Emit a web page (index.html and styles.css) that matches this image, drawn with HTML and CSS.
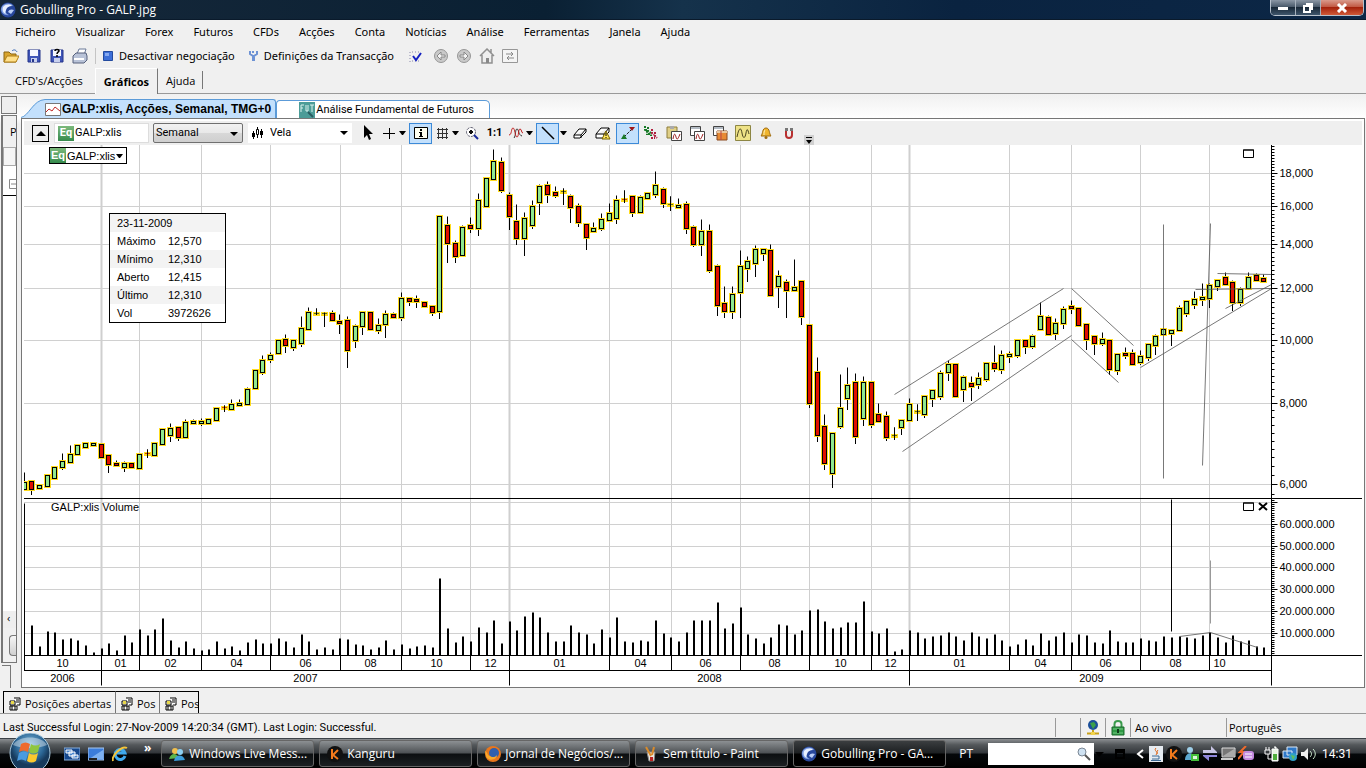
FILE: index.html
```html
<!DOCTYPE html>
<html lang="pt">
<head>
  <meta charset="UTF-8" />
  <meta name="viewport" content="width=device-width, initial-scale=1.0"/>
  <title>Gobulling Pro - GALP.jpg</title>
  <link rel="stylesheet" href="styles.css">
</head>
<body>

  <svg width="0" height="0" class="defs" aria-hidden="true">
    <defs>
      <symbol id="globe" viewBox="0 0 16 16">
        <circle cx="8" cy="8" r="7.5" fill="#27479c"/>
        <path d="M1 7c1-6 10-7 12-3-3-1-6 0-7 3s0 5 3 6c-4 1-8-2-8-6z" fill="#7f9fe0"/>
        <path d="M3 5c3-3 7-3 9-1-3 0-5 1-6 4s-1 2 0 4c-3-1-4-4-3-7z" fill="#e8f0ff"/>
        <path d="M8 10c1-3 4-3 6-2l-3 4z" fill="#b9cdf5"/>
      </symbol>
      <symbol id="people" viewBox="0 0 12 14">
        <path d="M5 1h6v7H8M1 4h5v4H1zM1 9h7v4H1zM3 9v4M6 9v4" fill="#fff" stroke="#000"/>
        <path d="M2 4h3v3H2z" fill="#e8d84a"/>
        <path d="M7 3h3M7 5h3" stroke="#000"/>
      </symbol>
      <symbol id="kanguru" viewBox="0 0 16 16">
        <circle cx="8" cy="8" r="8" fill="#111"/>
        <path d="M5 3v10M11 4l-5 5 5 4" fill="none" stroke="#f47a1c" stroke-width="2"/>
      </symbol>
      <symbol id="wave" viewBox="0 0 14 12">
        <path d="M5 11c2-2 1-9 3-9s1 6 5 7" fill="none" stroke="#333"/>
        <path d="M0 8c3 0 2-7 4-7s2 9 4 9 1-8 3-8 1 4 3 4" fill="none" stroke="#c02020"/>
      </symbol>
      <symbol id="page-wave" viewBox="0 0 16 16">
        <path d="M5.500 6.500h10v9h-10z" fill="#fff" stroke="#444"/>
        <path d="M7 14c1-6 2-6 3-2s2 2 4-3" fill="none" stroke="#a02020"/>
      </symbol>
    </defs>
  </svg>

  <header class="titlebar">
    <svg class="icon16"><use href="#globe"/></svg>
    <h1>Gobulling Pro - GALP.jpg</h1>
    <div class="window-controls">
      <button class="win-btn" aria-label="Minimizar"><svg width="12" height="8"><path d="M1 3h10v3H1z" fill="#fff"/></svg></button>
      <button class="win-btn" aria-label="Restaurar"><svg width="12" height="12"><path d="M4 2h6v6M2 4h6v6H2z" fill="none" stroke="#fff" stroke-width="2"/></svg></button>
      <button class="win-btn win-close" aria-label="Fechar"><svg width="12" height="10"><path d="M2 1l8 8M10 1l-8 8" stroke="#fff" stroke-width="3"/></svg></button>
    </div>
  </header>

  <nav class="menubar">
    <button>Ficheiro</button>
    <button>Visualizar</button>
    <button>Forex</button>
    <button>Futuros</button>
    <button>CFDs</button>
    <button>Acções</button>
    <button>Conta</button>
    <button>Notícias</button>
    <button>Análise</button>
    <button>Ferramentas</button>
    <button>Janela</button>
    <button>Ajuda</button>
  </nav>

  <div class="toolbar">
    <button class="tb" aria-label="Abrir"><svg class="icon16"><path d="M1 4h5l2 2h5v8H1z" fill="#d9a52e" stroke="#8a6512"/><path d="M1 14l3-6h12l-3 6z" fill="#ffe08a" stroke="#b07f16"/><path d="M9 3c2-2 4-1 5 1" fill="none" stroke="#3667b5"/></svg></button>
    <button class="tb" aria-label="Guardar"><svg class="icon16"><path d="M2 2h12v12H2z" fill="#3f55b8" stroke="#25358a"/><path d="M4 2h8v6H4z" fill="#f5f7ff"/><path d="M5 10h6v4H5z" fill="#c8d0ee"/><path d="M6 11h2v3H6z" fill="#25358a"/></svg></button>
    <button class="tb" aria-label="Guardar como"><svg class="icon16"><path d="M2 2h12v12H2z" fill="#3f55b8" stroke="#25358a"/><path d="M4 2h8v6H4z" fill="#f5f7ff"/><path d="M5 10h6v4H5z" fill="#c8d0ee"/><path d="M6 3c0-2 4-2 4 0 0 1-2 1-2 3M8 7v2" fill="none" stroke="#000" stroke-width="1.500"/></svg></button>
    <button class="tb" aria-label="Imprimir"><svg class="icon16"><path d="M5 6l2-5h7l-2 6z" fill="#fff" stroke="#6b7a99"/><path d="M1 8l3-3h10l1 3v4l-3 3H1z" fill="#b9c3d8" stroke="#56617c"/><path d="M2 11h10" stroke="#fff" stroke-width="2"/></svg></button>
    <span class="sep"></span>
    <button class="tb text"><svg width="10" height="10"><path d="M.5.5h9v9h-9z" fill="#3d6fd8" stroke="#234a9e"/><path d="M2 2h4v3H2z" fill="#86a9f0"/></svg>Desactivar negociação</button>
    <button class="tb text"><svg width="9" height="12"><path d="M1 1v3l3 2v5M8 1v3L5 6v5M4 1v2" fill="none" stroke="#6d92d4" stroke-width="2"/></svg>Definições da Transacção</button>
    <button class="tb" aria-label="Confirmar"><svg class="icon16"><path d="M2 4v10M4 4h9M4 13h9" stroke="#88a" stroke-dasharray="1 2"/><path d="M5 8l3 4 5-7" fill="none" stroke="#1420c0" stroke-width="2"/></svg></button>
    <div class="nav-icons">
      <button class="tb" aria-label="Anterior"><svg class="icon16"><circle cx="8" cy="8" r="6.500" fill="#c9c9c9" stroke="#979797"/><path d="M4 8l4-4v3h4v2H8v3z" fill="#f5f5f5" stroke="#888"/></svg></button>
      <button class="tb" aria-label="Seguinte"><svg class="icon16"><circle cx="8" cy="8" r="6.500" fill="#c9c9c9" stroke="#979797"/><path d="M12 8L8 4v3H4v2h4v3z" fill="#f5f5f5" stroke="#888"/></svg></button>
      <button class="tb" aria-label="Início"><svg class="icon16"><path d="M1 8l7-7 7 7M3 7v8h10V7M12 5V1" fill="#eee" stroke="#909090" stroke-width="1.500"/><path d="M7 10h3v5H7z" fill="#888"/></svg></button>
      <button class="tb" aria-label="Actualizar"><svg class="icon16"><path d="M.5 1.500h15v13H.5z" fill="#f4f4f4" stroke="#979797"/><path d="M4 6h7M9 4l2 2-2 2M12 10H5M7 8l-2 2 2 2" fill="none" stroke="#888"/></svg></button>
    </div>
  </div>

  <div class="module-tabs">
    <button>CFD's/Acções</button>
    <button class="selected">Gráficos</button>
    <button class="last">Ajuda</button>
    <span class="rest"></span>
  </div>

  <main class="workspace">
    <aside class="dock">
      <div class="dock-head"></div>
      <div class="dock-panel">
        <div class="dock-title">P</div>
        <div class="dock-columns"></div>
        <div class="dock-row"><svg width="7" height="10"><path d="M7 .5H.5v9H7M2 5h5" fill="none" stroke="#888"/></svg></div>
        <div class="dock-body"></div>
        <div class="dock-scroll">‹</div>
        <div class="dock-foot"><span></span></div>
      </div>
      <div class="dock-end"></div>
    </aside>

    <section class="chart-window">
      <div class="doc-tabs">
        <svg class="slant" width="24" height="19"><path d="M0 19C8 17 12 1 24 .5V19z" fill="#c3e0fc"/><path d="M0 18.500C8 17 12 1 24 .5" fill="none" stroke="#5c9bd8"/></svg>
        <button class="doc-tab selected"><svg width="16" height="13"><path d="M.5.500h15v12H.5z" fill="#fff" stroke="#777"/><path d="M1 9l3-3 3 2 3-4 5 4" fill="none" stroke="#c02a2a"/></svg>GALP:xlis, Acções, Semanal, TMG+0</button>
        <button class="doc-tab"><svg width="16" height="16"><path d="M0 0h16v16H0z" fill="#4c9c98"/><path d="M2 10V3h3M2 6h2M7 3v6h2V3M11 3h4M13 3v7" fill="none" stroke="#d8f2ee"/><path d="M9 10l5 5" stroke="#2a5c60" stroke-width="2"/></svg>Análise Fundamental de Futuros</button>
      </div>

      <div class="chart-frame">
        <div class="chart-tools">
          <button class="collapse" aria-label="Recolher"><svg width="10" height="6"><path d="M0 6l5-5 5 5z"/></svg></button>
          <label class="symbol-field"><span class="eq">Eq</span><input type="text" value="GALP:xlis" aria-label="Símbolo"></label>
          <div class="select-wrap period"><select aria-label="Período"><option>Semanal</option></select></div>
          <div class="select-wrap style">
            <svg width="14" height="12"><path d="M2.500 4v8M6.500 0v11M10.500 2v9" stroke="#000"/><path d="M1 6h3v4H1zM9 4h3v4H9z" fill="#000"/><path d="M5.500 2.500h2v5h-2z" fill="#fff" stroke="#000"/></svg>
            <select aria-label="Tipo de gráfico"><option>Vela</option></select>
          </div>
          <button class="tool" aria-label="Cursor"><svg class="icon16"><path d="M4 0v13l3-3 2 5 2-1-2-5h4z"/></svg></button>
          <button class="tool drop" aria-label="Cruz"><svg class="icon16"><path d="M2 8.500h12M8.500 3v11" stroke="#000"/></svg></button><i class="caret"></i>
          <button class="tool active" aria-label="Informação"><svg class="icon16"><path d="M1.500 2.500h13v11h-13z" fill="#fffff0" stroke="#000"/><path d="M7 4h2v2H7zM6 7h3v4h1v1H6v-1h1V8H6z"/></svg></button>
          <button class="tool drop" aria-label="Grelha"><svg class="icon16"><path d="M4.500 3v11M8.500 3v11M12.500 3v11M3 4.500h11M3 8.500h11M3 12.500h11" stroke="#333"/></svg></button><i class="caret"></i>
          <button class="tool" aria-label="Zoom"><svg class="icon16"><circle cx="7" cy="7" r="4.500" fill="#fff" stroke="#667" stroke-dasharray="3 1"/><path d="M5 7h4M7 5v4" stroke="#111" stroke-width="2"/><path d="M10 10l4 4" stroke="#1a2a9a" stroke-width="2"/></svg></button>
          <button class="tool ratio">1:1</button>
          <button class="tool drop" aria-label="Indicadores"><svg width="14" height="12"><use href="#wave"/></svg></button><i class="caret"></i>
          <button class="tool active" aria-label="Linha"><svg class="icon16"><path d="M2 2l12 12" stroke="#000" stroke-width="1.500"/></svg></button><i class="caret"></i>
          <button class="tool" aria-label="Apagar"><svg class="icon16"><path d="M2 10l5-6h7l-5 6zM2 10v3h6l6-6V4M9 10v3" fill="#fff" stroke="#000"/></svg></button>
          <button class="tool" aria-label="Apagar tudo"><svg class="icon16"><path d="M1 9l5-6h8l-5 6zM1 9v4h7l6-6V3M9 9v4" fill="#fff" stroke="#000"/><path d="M11 6l4 8H7z" fill="#ffe65a" stroke="#776200"/><path d="M11 8v3M11 12v1" stroke="#000"/></svg></button>
          <button class="tool active" aria-label="Tendência"><svg class="icon16"><path d="M4 12l8-8" stroke="#222" stroke-dasharray="3 1"/><path d="M1 14l3-5 3 5z" fill="#187a28"/><path d="M9 2h6l-3 4z" fill="#a01818"/></svg></button>
          <button class="tool" aria-label="Sinais"><svg class="icon16"><path d="M2 1v4l2 1v4M5 2v4l3 2v3M2 5h3M5 9h3" fill="none" stroke="#187a28" stroke-width="2" stroke-dasharray="2 1"/><path d="M9 4v4l2 2M12 7v4l2 2M8 13h4" fill="none" stroke="#b02040" stroke-width="2" stroke-dasharray="2 1"/></svg></button>
          <button class="tool" aria-label="Colar"><svg class="icon16"><path d="M1 2h10v11H1z" fill="#e0cf86" stroke="#8c7c3a"/><path d="M4 1h4v3H4z" fill="#aaa"/><use href="#page-wave"/></svg></button>
          <button class="tool" aria-label="Copiar"><svg class="icon16"><path d="M1.500 1.500h10v9h-10z" fill="#fff" stroke="#444"/><path d="M2 3h9" stroke="#678"/><use href="#page-wave"/></svg></button>
          <button class="tool" aria-label="Modelos"><svg class="icon16"><path d="M1.500 1.500h10v9h-10z" fill="#fff" stroke="#444"/><path d="M2 3h9" stroke="#678"/><path d="M5 6h10v9H5z" fill="#e88a34" stroke="#8a4a20"/><path d="M5 7h10" stroke="#e9c8a0" stroke-width="2"/><path d="M9 6v9" stroke="#b44"/></svg></button>
          <button class="tool" aria-label="Estudos"><svg class="icon16"><path d="M.5.500h15v15H.5z" fill="#eee287" stroke="#8d8644"/><path d="M2 12C4 2 6 2 7 8s3 6 4 0 2-3 3 1" fill="none" stroke="#4a4420"/></svg></button>
          <button class="tool" aria-label="Alarme"><svg class="icon16"><path d="M3 11c2-2 1-8 5-8s3 6 5 8z" fill="#f0b52e" stroke="#a06c10"/><path d="M7 5c-1 1-1 3-1 5" fill="none" stroke="#fff2c0"/><circle cx="8" cy="12.500" r="1.500" fill="#a06c10"/></svg></button>
          <button class="tool" aria-label="Íman"><svg class="icon16"><path d="M5 6v4c0 4 6 4 6 0V6" fill="none" stroke="#b83030" stroke-width="2"/><path d="M4 4.500h3M9 4.500h3" stroke="#777" stroke-width="3"/></svg></button>
          <button class="more" aria-label="Mais"><svg width="10" height="10"><path d="M2 2h6v1H2zM2 5h6L5 9z"/></svg></button>
        </div>

        <div class="chart">
          <svg id="plot" role="img" aria-label="GALP:xlis semanal"></svg>
          <button class="series"><span class="eq">Eq</span>GALP:xlis<i class="caret"></i></button>
          <table class="quote">
            <tr><th colspan="2">23-11-2009</th></tr>
            <tr><th>Máximo</th><td>12,570</td></tr>
            <tr><th>Mínimo</th><td>12,310</td></tr>
            <tr><th>Aberto</th><td>12,415</td></tr>
            <tr><th>Último</th><td>12,310</td></tr>
            <tr><th>Vol</th><td>3972626</td></tr>
          </table>
          <button class="pane-btn price-max" aria-label="Maximizar preço"><svg width="11" height="9"><path d="M.5 1h10v7.500H.5zM0 1h11" fill="none" stroke="#000"/></svg></button>
          <button class="pane-btn vol-max" aria-label="Maximizar volume"><svg width="11" height="9"><path d="M.5 1h10v7.500H.5zM0 1h11" fill="none" stroke="#000"/></svg></button>
          <button class="pane-btn vol-close" aria-label="Fechar volume"><svg width="10" height="9"><path d="M1 1l8 7M9 1L1 8" stroke="#000" stroke-width="2"/></svg></button>
        </div>
      </div>
    </section>
  </main>

  <div class="bottom-tabs">
    <button><svg width="12" height="14"><use href="#people"/></svg>Posições abertas</button>
    <button class="short"><svg width="12" height="14"><use href="#people"/></svg>Pos</button>
    <button class="short cut"><svg width="12" height="14"><use href="#people"/></svg>Pos</button>
  </div>

  <div class="statusbar">
    <span class="message">Last Successful Login: 27-Nov-2009 14:20:34 (GMT). Last Login: Successful.</span>
    <span class="cell"></span>
    <span class="cell"><svg width="14" height="16"><circle cx="7" cy="5" r="5" fill="#1b4f9a"/><path d="M4 3l4-1 2 3-3 4z" fill="#3ba04a"/><path d="M7 10v3M1 13.500h12" stroke="#c9a21c" stroke-width="2"/><path d="M5 12h4v3H5z" fill="#f2d34a"/></svg></span>
    <span class="cell"><svg width="14" height="16"><path d="M3.500 7V4c0-4 7-4 7 0v3" fill="none" stroke="#3a9a4c" stroke-width="2"/><path d="M1 7h12v8H1z" fill="#2f9a45" stroke="#1c6a2e"/><path d="M2 9h10M2 13h10" stroke="#74c884"/><path d="M6 9h2v4H6z" fill="#0d3a18"/></svg></span>
    <span class="cell live">Ao vivo</span>
    <span class="cell lang">Português</span>
  </div>

  <footer class="taskbar">
    <button class="start" aria-label="Iniciar"><svg width="42" height="36" viewBox="0 0 42 36">
      <defs><radialGradient id="orb" cy=".3"><stop offset="0" stop-color="#7fb8dc"/><stop offset=".7" stop-color="#2c6796"/><stop offset="1" stop-color="#173a5c"/></radialGradient></defs>
      <circle cx="21" cy="20" r="20" fill="url(#orb)" stroke="#a8c8dc"/>
      <path d="M4 12C9 2 33 2 38 12 30 16 12 16 4 12z" fill="#fff" opacity=".4"/>
      <path d="M12 11c3-2 6-2 9 0l-2 8c-3-2-6-2-9 0z" fill="#ee6a2c"/>
      <path d="M22 11c3 2 6 2 9 0l-2 8c-3 2-6 2-9 0z" fill="#8fc63f"/>
      <path d="M10 20c3-2 6-2 9 0l-2 8c-3-2-6-2-9 0z" fill="#4a9be0"/>
      <path d="M20 20c3 2 6 2 9 0l-2 8c-3 2-6 2-9 0z" fill="#fbc92e"/>
    </svg></button>
    <div class="quick">
      <button aria-label="Alternar janelas"><svg class="icon16"><path d="M0 2h16v12H0z" fill="#16498f" stroke="#8ab0dc"/><path d="M2 4h6v3H2zM5 6h6v4H5zM8 9h6v3H8z" fill="#4a86cf" stroke="#fff"/></svg></button>
      <button aria-label="Ambiente de trabalho"><svg class="icon16"><path d="M0 2h16v12H0z" fill="#3b7ddb" stroke="#a9c8ee"/><path d="M1 13L15 4v9z" fill="#7db1f1"/><path d="M1 12h8v2H1z" fill="#222"/></svg></button>
      <button aria-label="Internet Explorer"><svg class="icon16"><path d="M13 10a5 5 0 1 1 0-3H4" fill="none" stroke="#3fa9ee" stroke-width="3"/><path d="M1 15C-1 10 10-1 15 2" fill="none" stroke="#f3c43b" stroke-width="2"/></svg></button>
      <span class="chevrons">»</span>
    </div>
    <div class="tasks">
      <button class="task"><svg class="icon16"><circle cx="6" cy="5" r="3" fill="#f1c04e"/><circle cx="11" cy="6" r="3" fill="#8ed0f2"/><path d="M0 13c2-7 8-6 10-1z" fill="#5bb54d"/><path d="M5 15c1-7 9-7 11-1z" fill="#3d9edc"/></svg><span>Windows Live Mess...</span></button>
      <button class="task"><svg class="icon16"><use href="#kanguru"/></svg><span>Kanguru</span></button>
      <button class="task"><svg class="icon16"><circle cx="8" cy="8" r="8" fill="#e8761c"/><circle cx="9" cy="7" r="5" fill="#2f5fae"/><path d="M0 5c3 1 2 5 5 5 2 2 6 1 7-1 0 5-9 7-11 1z" fill="#f7a82a"/></svg><span>Jornal de Negócios/...</span></button>
      <button class="task"><svg class="icon16"><path d="M4 6h8l-1 9H6z" fill="#ece7e0" stroke="#888"/><path d="M3 1l5 9M9 9l2-8" stroke="#d98b2b" stroke-width="2"/><path d="M7 11h3v4H7z" fill="#b22"/></svg><span>Sem título - Paint</span></button>
      <button class="task current"><svg class="icon16"><use href="#globe"/></svg><span>Gobulling Pro - GA...</span></button>
    </div>
    <span class="kbd">PT</span>
    <label class="search"><input type="text" aria-label="Pesquisar"><svg width="14" height="14"><circle cx="5" cy="5" r="4" fill="#cfe2f2" stroke="#7b8794"/><path d="M8 8l5 5" stroke="#555" stroke-width="2"/></svg></label>
    <div class="tray">
      <svg class="icon16"><path d="M1 6h9L5 11z"/></svg>
      <svg class="icon16 last-dark"><path d="M4 4h8v8H4zM4 6h8" fill="none" stroke="#000" stroke-width="2"/></svg>
      <svg width="12" height="16"><path d="M9 4L4 8l5 4" fill="none" stroke="#fff" stroke-width="2"/></svg>
      <svg class="icon16"><path d="M1 0h14v16H1z" fill="#e6ebf0"/><path d="M8 2c-3 3 3 3 0 7M10 4c-2 2 0 2-1 4" fill="none" stroke="#e26a1c"/><path d="M4 10h7v3H4M3 14.500h10" fill="none" stroke="#3d6a94"/></svg>
      <svg class="icon16"><use href="#kanguru"/></svg>
      <svg class="icon16"><circle cx="6" cy="4" r="3" fill="#9fd0ea"/><path d="M1 14c0-9 10-9 10 0z" fill="#5ca8d0"/><path d="M7 8h8v7H7z" fill="#45bf3a"/><path d="M9 10h4v3H9z" fill="#dff6dc"/></svg>
      <svg class="icon16"><path d="M1 4h8V0l6 6v1H1z" fill="#c9c6e4"/><path d="M15 9H1v1l6 5v-4h8z" fill="#9088dc"/></svg>
      <svg class="icon16"><path d="M2 2h13v9H2z" fill="#777" stroke="#ddd"/><path d="M3 10L14 3v7z" fill="#aaa"/><path d="M1 13h12" stroke="#ccc" stroke-width="2"/></svg>
      <svg class="icon16 gap"><path d="M8 0L2 6h4L0 13" fill="none" stroke="#ee6a2c" stroke-width="2"/><rect x="5" y="5" width="11" height="9" rx="3" fill="#c48be0"/><path d="M7 8h7M7 11h7" stroke="#fff"/></svg>
      <svg class="icon16"><path d="M8 3h6v12H8zM10 1h2v2" fill="#e8f4e4" stroke="#fff"/><path d="M9 8h4v6H9z" fill="#4fae3c"/><path d="M2 1v3M5 1v3M1 4h5v4H1zM4 8v5h4" fill="none" stroke="#fff"/></svg>
      <svg class="icon16"><path d="M5 1h10v8H5zM1 5h9v7H1z" fill="#2e78c8" stroke="#dfe9f3"/><circle cx="11" cy="11" r="4" fill="#2f9fc8"/><path d="M9 9l4 1-2 4z" fill="#5fc05a"/></svg>
      <svg class="icon16"><path d="M1 6h3l4-4v12L4 10H1z" fill="#eee"/><path d="M10 5c2 2 2 4 0 6M13 3c3 3 3 7 0 10" fill="none" stroke="#cfeccf"/></svg>
      <time>14:31</time>
    </div>
  </footer>

  <script src="chart.js"></script>
</body>
</html>
```
FILE: styles.css
```css
* {
  box-sizing: border-box;
}

body {
  font-family: "Open Sans", sans-serif;
  font-size: 11px;
  line-height: 16px;
  margin: 0;
  color: #000;
  background-color: #f0f0f0;
  display: flex;
  flex-direction: column;
  min-height: 100vh;
}

button,
input,
select {
  font: inherit;
  color: inherit;
  background: none;
  border: none;
  margin: 0;
  padding: 0;
  white-space: nowrap;
}

svg {
  display: block;
  flex: none;
}

.defs {
  position: absolute;
}

.icon16 {
  width: 16px;
  height: 16px;
}

/* title bar */
.titlebar {
  display: flex;
  align-items: center;
  gap: 4px;
  height: 20px;
  color: #fff;
  background: linear-gradient(90deg, #16283a, #0a2033 40%, #15324b 50%, #0a2340 70%, #0c2746);
  border-bottom: 1px solid #0a1a2b;
}

.titlebar h1 {
  flex: 1;
  margin: 0;
  font-size: 12px;
  font-weight: normal;
}

.window-controls {
  display: flex;
  align-self: flex-start;
  height: 16px;
  margin-right: 2px;
  border: 1px solid #b7c1cc;
  border-top: none;
  border-radius: 0 0 5px 5px;
  overflow: hidden;
}

.win-btn {
  display: flex;
  align-items: center;
  justify-content: center;
  width: 25px;
  border-right: 1px solid #a5b0bc;
  background: linear-gradient(#8b97a5, #4a5a6b 45%, #182838 50%, #3f566c);
}

.win-close {
  width: 42px;
  border-right: none;
  background: linear-gradient(#d99a8c, #c25a45 45%, #a4220c 50%, #cf5a38);
}

/* menu and main toolbar */
.menubar,
.toolbar {
  display: flex;
  align-items: center;
  height: 24px;
  font-family: "Noto Sans", sans-serif;
}

.menubar {
  gap: 20px;
  padding-left: 15px;
}

.toolbar {
  gap: 7px;
  padding-left: 3px;
}

.toolbar .text {
  display: flex;
  align-items: center;
  gap: 6px;
  margin-right: 7px;
}

.nav-icons {
  display: flex;
  gap: 7px;
  margin-left: 2px;
}

.sep {
  height: 16px;
  border-left: 1px solid #c4c4c4;
}

.module-tabs {
  display: flex;
  height: 26px;
}

.module-tabs button {
  padding: 0 8px;
  border-bottom: 1px solid #999;
}

.module-tabs button:first-child {
  padding: 0 12px 0 15px;
}

.module-tabs .selected {
  font-weight: bold;
  border-bottom: none;
  border-left: 1px solid #fff;
  border-top: 1px solid #fff;
  border-right: 1px solid #777;
}

.module-tabs .last {
  position: relative;
}

.module-tabs .last::after {
  content: "";
  position: absolute;
  right: 0;
  top: 3px;
  height: 18px;
  border-right: 1px solid #777;
}

.rest {
  flex: 1;
  border-bottom: 1px solid #999;
}

/* workspace */
.workspace {
  flex: 1;
  display: flex;
  background: linear-gradient(#f0f0f0, #fff 24px, #f0f0f0 30px);
}

.dock {
  width: 18px;
  display: flex;
  flex-direction: column;
  padding: 2px 1px 0;
  overflow: hidden;
}

.dock-head {
  height: 18px;
  border: 1px solid #777;
  background: #eee;
}

.dock-panel {
  flex: 1;
  display: flex;
  flex-direction: column;
  margin-top: 1px;
  border: 1px solid #777;
  border-left-width: 2px;
  background: #f0f0f0;
}

.dock-title {
  height: 31px;
  padding: 8px 0 0 7px;
  overflow: hidden;
}

.dock-columns {
  height: 19px;
  border: 1px solid #aaa;
  background: #f5f5f5;
}

.dock-row {
  display: flex;
  justify-content: flex-end;
  height: 30px;
  padding-top: 13px;
  background: #fff;
  border-bottom: 1px solid #000;
}

.dock-body {
  flex: 1;
  background: #fff;
}

.dock-scroll {
  height: 17px;
  padding-left: 4px;
  line-height: 14px;
  background: #eee;
}

.dock-foot {
  height: 34px;
  padding: 7px 0 6px 6px;
}

.dock-foot span {
  display: block;
  height: 21px;
  border: 1px solid #777;
  border-right: none;
  border-radius: 4px 0 0 4px;
  background: linear-gradient(#f6f6f6, #d0d0d0);
}

.dock-end {
  height: 23px;
  margin: 2px 6px 0 1px;
  border-top: 1px solid #777;
  border-right: 1px solid #777;
}

.chart-window {
  flex: 1;
  min-width: 0;
  display: flex;
  flex-direction: column;
  padding: 5px 1px 0 3px;
}

.doc-tabs {
  display: flex;
  align-items: flex-end;
  height: 19px;
  font-family: Roboto, sans-serif;
}

.doc-tab {
  display: flex;
  align-items: center;
  gap: 1px;
  height: 18px;
  padding: 0 15px 0 22px;
  border: 1px solid #5c9bd8;
  border-bottom: none;
  border-radius: 4px 5px 0 0;
  background: #fff;
}

.doc-tab.selected {
  height: 19px;
  padding: 0 4px 0 0;
  border-left: none;
  border-radius: 0 3px 0 0;
  font-family: "Liberation Sans", Arial, sans-serif;
  font-size: 12px;
  font-weight: bold;
  background: #c3e0fc;
}

.chart-frame {
  flex: 1;
  border: 1px solid #777;
  background: #fff;
  padding: 2px 2px 0;
}

.chart-tools {
  display: flex;
  align-items: center;
  height: 24px;
  padding-left: 8px;
  font-family: Roboto, sans-serif;
  background: #efefef;
}

.collapse {
  display: flex;
  align-items: center;
  justify-content: center;
  width: 17px;
  height: 17px;
  margin-right: 5px;
  border: 1px solid #000;
}

.eq {
  display: inline-block;
  width: 16px;
  height: 15px;
  margin-right: 1px;
  line-height: 14px;
  text-align: center;
  font-weight: bold;
  color: #fff;
  background: linear-gradient(#7cb97c, #358a4c);
}

.symbol-field {
  display: flex;
  align-items: center;
  width: 95px;
  height: 20px;
  padding-left: 3px;
  margin-right: 4px;
  border: 1px solid #ddd;
  background: #fff;
}

.symbol-field input {
  flex: 1;
  min-width: 0;
}

.select-wrap {
  position: relative;
  display: flex;
  align-items: center;
  height: 20px;
}

.select-wrap select {
  appearance: none;
  flex: 1;
  height: 20px;
}

.select-wrap::after {
  content: "";
  position: absolute;
  right: 4px;
  top: 8px;
  border: 4px solid transparent;
  border-top-color: #000;
  border-bottom: none;
}

.period {
  width: 90px;
  margin-right: 5px;
  padding-left: 2px;
  border: 1px solid #707070;
  border-radius: 2px;
  background: linear-gradient(#f2f2f2, #e8e8e8 50%, #d8d8d8 50%, #cfcfcf);
}

.style {
  width: 104px;
  margin-right: 4px;
  padding-left: 3px;
  gap: 5px;
  background: #fff;
}

.tool {
  display: flex;
  align-items: center;
  justify-content: center;
  width: 23px;
  height: 21px;
}

.tool.drop {
  width: 19px;
}

.tool.active {
  margin-left: 2px;
  border: 1px solid #3c8ad8;
  background: #c3e0fc;
}

.ratio {
  font-weight: bold;
}

.caret {
  width: 7px;
  margin: 0 1px;
  border: 3px solid transparent;
  border-top: 4px solid #000;
  border-bottom: none;
}

.more {
  align-self: flex-end;
  margin-left: 4px;
  background: #d0d0d0;
}

/* chart and what floats over it */
.chart {
  position: relative;
  font-family: "Liberation Sans", Arial, sans-serif;
}

#plot {
  width: 100%;
  height: 541px;
  font-size: 11px;
}

.series {
  position: absolute;
  left: 25px;
  top: 2px;
  display: flex;
  align-items: center;
  height: 17px;
  padding-right: 2px;
  border: 1px solid #000;
  background: #fff;
}

.quote {
  position: absolute;
  left: 85px;
  top: 68px;
  width: 117px;
  border: 1px solid #000;
  border-spacing: 0;
  background: #fff;
}

.quote tr:nth-child(odd) {
  background: #f3f3f3;
}

.quote th,
.quote td {
  height: 18px;
  padding: 0 0 0 7px;
  line-height: 16px;
  font-weight: normal;
  text-align: left;
}

.quote th {
  width: 51px;
}

.pane-btn {
  position: absolute;
  top: 4px;
  right: 108px;
}

.vol-max {
  top: 357px;
}

.vol-close {
  top: 357px;
  right: 94px;
}

/* bottom of the window */
.bottom-tabs {
  display: flex;
  height: 26px;
  padding: 3px 0 0 3px;
  border-bottom: 1px solid #999;
}

.bottom-tabs button {
  display: flex;
  align-items: center;
  gap: 4px;
  width: 113px;
  padding: 3px 0 0 5px;
  overflow: hidden;
  border: 1px solid #000;
  border-right-color: #777;
  border-bottom: none;
}

.bottom-tabs .short {
  width: 44px;
  border-left: none;
}

.bottom-tabs .cut {
  width: 39px;
  border-right-color: #000;
}

.statusbar {
  display: flex;
  height: 24px;
  padding: 4px 0 1px 3px;
}

.message {
  flex: 1;
  line-height: 20px;
  font-family: Roboto, sans-serif;
}

.cell {
  display: flex;
  align-items: center;
  justify-content: center;
  width: 25px;
  border-left: 1px solid #999;
}

.live,
.lang {
  justify-content: flex-start;
  padding-left: 4px;
  width: 96px;
}

.lang {
  width: 140px;
  padding-left: 2px;
}

/* taskbar */
.taskbar {
  display: flex;
  align-items: center;
  height: 30px;
  color: #fff;
  font-size: 12px;
  border-top: 1px solid #3c4248;
  background: linear-gradient(#8b8e91, #54585b 20%, #32363a 48%, #05080a 52%, #000);
}

.start {
  width: 42px;
  height: 36px;
  margin: -5px 13px 0 9px;
}

.quick {
  display: flex;
  align-items: center;
  gap: 8px;
  width: 98px;
}

.chevrons {
  margin: -12px 0 0 8px;
  font-weight: bold;
}

.tasks {
  display: flex;
  gap: 5px;
}

.task {
  display: flex;
  align-items: center;
  gap: 4px;
  width: 153px;
  height: 27px;
  padding-left: 7px;
  border: 1px solid #666;
  border-radius: 3px;
  background: linear-gradient(#8c9093, #4d5154 48%, #0c0f11 52%, #1c2023);
}

.task.current {
  background: linear-gradient(#3b3e40, #1c1f21 48%, #000 52%);
}

.kbd {
  width: 42px;
  padding-left: 13px;
}

.search {
  display: flex;
  align-items: center;
  width: 106px;
  height: 22px;
  padding-right: 3px;
  background: #fff;
}

.search input {
  flex: 1;
  min-width: 0;
}

.tray {
  display: flex;
  align-items: center;
  gap: 2px;
  margin-left: auto;
  padding-right: 14px;
}

.tray .gap {
  margin-right: 8px;
}

.tray .last-dark {
  margin-right: 4px;
}

.tray time {
  margin-left: 4px;
  font-family: Roboto, sans-serif;
}
```
FILE: chart.js
```js
const plot = document.getElementById("plot");
const NS = "http://www.w3.org/2000/svg";
const WEEK = 7.7;
const BASE_WIDTH = 1248;
const AXIS_WIDTH = 90;

// direction (g/r), high, body top, body bottom, low
const candles = `
g472,482,489,489 r481,481,489,494 g484,485,488,488 g475,475,486,486 g466,467,478,478
g453,461,467,469 g445,454,462,462 g444,445,454,454 g442,443,447,448 g442,443,445,445
r444,444,457,457 r455,455,464,472 r460,463,465,465 g461,463,467,471 r463,463,467,467
g454,454,468,468 r449,453,454,457 g443,443,455,456 g429,429,444,444 g423,428,435,441
r427,427,437,440 g419,422,437,437 g419,421,423,423 g418,421,423,425 g419,419,423,423
g407,408,420,420 r405,407,408,411 g399,404,409,409 g399,403,405,405 g387,389,404,404
g370,370,388,388 g355,360,372,374 g352,355,359,362 g340,340,353,354 r334,339,345,352
g340,340,347,350 g316,328,343,346 g307,312,329,329 g308,313,314,314 g312,313,314,326
r310,313,320,320 r314,321,323,333 r316,320,350,367 g324,326,340,347 g311,312,326,334
r311,312,329,330 g318,325,330,333 g310,314,324,337 r312,314,317,318 g292,298,317,320
r297,298,301,305 r295,299,301,307 r301,302,306,306 r305,306,312,315 g216,216,311,318
r216,225,243,262 r240,243,256,262 g225,227,255,255 r217,225,228,232 g193,200,228,235
g178,178,206,206 g149,161,179,179 r157,162,190,192 r192,195,216,229 r204,221,238,244
g212,218,238,255 g200,206,225,228 g184,186,202,214 r181,185,194,202 r186,192,195,197
g188,191,192,204 r194,196,207,222 r203,206,222,226 r224,224,237,249 g222,228,231,232
g213,219,228,230 g203,213,220,220 g195,200,218,223 r190,199,200,202 r196,196,212,216
g195,197,212,212 g193,193,198,198 g171,185,194,197 r187,189,203,207 g196,204,205,210
g198,205,207,207 r201,204,228,233 r225,227,244,246 g219,231,244,255 r224,231,270,272
r264,266,305,315 r286,303,311,317 g286,294,311,318 g250,266,292,317 g256,261,268,281
g245,249,263,276 g249,249,253,260 r244,250,295,295 g270,276,286,307 r279,282,290,317
g259,287,290,290 r281,281,316,324 r325,325,403,407 r357,372,435,441 r414,426,463,469
g433,433,473,487 g374,408,426,428 g367,385,398,409 r373,382,436,443 g376,382,418,425
r382,382,424,427 r403,414,421,421 r411,416,437,440 g427,435,436,439 g420,420,427,434
g398,404,420,420 g404,411,412,420 g395,396,414,417 g390,390,398,406 g370,373,396,399
g360,364,372,380 r364,364,396,396 g375,377,389,401 r376,383,386,400 g372,378,384,388
g363,363,379,381 r345,363,368,371 g350,355,369,373 g351,354,356,362 g340,340,355,357
r340,340,346,353 g334,336,346,348 g302,316,329,329 r315,317,334,334 g318,323,333,339
g306,309,323,328 r300,306,308,313 r308,308,325,325 r324,324,339,349 r336,336,343,354
g332,339,343,345 r340,340,369,374 g354,354,370,374 r347,353,355,358 r349,353,364,364
g350,356,362,364 g344,344,357,360 g334,336,345,354 g329,329,334,334 g330,330,333,345
g305,308,330,330 g301,301,313,316 g291,299,304,308 g283,297,299,305 g283,285,298,307
g280,280,286,290 r272,277,284,284 r280,282,302,310 g287,289,302,305 g272,277,288,288
r273,275,280,280 r274,278,281,281`.trim().split(/\s+/);

const volumes = [
  0, 30, 9, 24, 23, 16, 17, 15, 10, 3, 7, 12, 5, 20, 13, 26, 20, 26, 37, 15, 8, 14, 7, 5, 6, 14, 7,
  9, 5, 13, 16, 12, 12, 17, 14, 8, 21, 14, 6, 8, 6, 17, 16, 11, 10, 6, 8, 15, 6, 11, 7, 9, 10, 8,
  77, 27, 13, 19, 14, 28, 23, 35, 12, 34, 25, 39, 43, 38, 23, 14, 14, 30, 23, 21, 12, 26, 18, 38,
  14, 13, 15, 14, 35, 22, 18, 14, 23, 35, 35, 35, 53, 27, 32, 48, 21, 17, 12, 18, 31, 30, 21, 25,
  45, 46, 34, 27, 28, 33, 33, 54, 24, 22, 27, 4, 6, 25, 23, 17, 19, 20, 23, 19, 15, 23, 19, 17, 21,
  15, 9, 11, 16, 10, 22, 15, 19, 23, 13, 21, 20, 13, 12, 25, 14, 13, 13, 17, 15, 14, 19, 18, 19, 18,
  17, 20, 23, 18, 13, 20, 14, 15, 9, 8
];

// start of each month block and where its label is centred
const months = [
  [24, 62, "10"], [101, 120, "01"], [139, 170, "02"], [201, 236, "04"], [270, 305, "06"],
  [340, 370, "08"], [401, 436, "10"], [470, 490, "12"], [509, 559, "01"], [609, 640, "04"],
  [671, 705, "06"], [740, 774, "08"], [809, 840, "10"], [871, 890, "12"], [909, 959, "01"],
  [1009, 1040, "04"], [1071, 1105, "06"], [1140, 1175, "08"], [1209, 1219, "10"]
];
const years = [[24, 62, "2006"], [101, 305, "2007"], [509, 709, "2008"], [909, 1091, "2009"]];

const trends = [
  [894, 394, 1063, 288], [902, 451, 1071, 335], [1071, 288, 1133, 345], [1071, 339, 1118, 382],
  [1140, 367, 1271, 288], [1163, 224, 1163, 478], [1210, 223, 1202, 465], [1217, 273, 1271, 274],
  [1195, 289, 1271, 288], [1225, 308, 1271, 284], [1179, 636, 1210, 632], [1210, 632, 1257, 647]
];

function add(name, attrs, text) {
  const el = document.createElementNS(NS, name);
  for (const key in attrs) el.setAttribute(key, attrs[key]);
  if (text) el.textContent = text;
  plot.appendChild(el);
}

function line(x1, y1, x2, y2, stroke, width) {
  add("line", { x1, y1, x2, y2, stroke, "stroke-width": width || 1 });
}

function draw() {
  plot.textContent = "";
  const total = plot.clientWidth;
  const right = total - AXIS_WIDTH;
  const X = x => Math.floor((x - 24) * right / BASE_WIDTH + 0.01) + 0.5;
  const Y = y => y - 145 + 0.5;
  const priceY = p => Math.round(173 + Math.log(18 / p) * 283.4);
  const volY = v => Math.round(655 - v * 2.19);
  const axis = right - 0.5;

  // grid
  for (let p = 6; p <= 18; p += 2) line(0, Y(priceY(p)), axis, Y(priceY(p)), "#d0d0d0");
  for (let v = 10; v <= 70; v += 10) line(0, Y(volY(v)), axis, Y(volY(v)), "#d0d0d0");
  months.slice(1).forEach(m => {
    const year = years.some(y => y[0] === m[0]);
    line(X(m[0]), 0, X(m[0]), Y(655), "#cfcfcf", year ? 2 : 1);
  });

  // candles
  candles.forEach((c, i) => {
    const [high, top, bottom, low] = c.slice(1).split(",").map(Number);
    const x = X(24 + i * WEEK);
    const h = bottom - top;
    line(x, Y(high), x, Y(low) + 0.5, "#000");
    add("rect", { x: x - 3.5, y: Y(top) - 1.5, width: 7, height: h + 3, fill: "#ffdc1e" });
    if (h < 2) {
      line(x - 2.5, Y(top), x + 2.5, Y(top), c[0] === "g" ? "#5c6a20" : "#d04010");
      line(x, Y(high), x, Y(low) + 0.5, "#000");
    } else {
      add("rect", { x: x - 2, y: Y(top), width: 4, height: h, fill: c[0] === "g" ? "#90e890" : "#e01000", stroke: "#000" });
    }
  });

  // volume bars
  volumes.forEach((v, i) => {
    const x = X(24 + i * WEEK);
    if (v) add("rect", { x: x - 0.5, y: Y(655) - v, width: 2, height: v, fill: "#000" });
  });

  // drawn lines
  trends.forEach(t => line(X(t[0]), Y(t[1]), X(t[2]), Y(t[3]), "#555", 0.8));
  line(X(1171), Y(499), X(1171), Y(631), "#000");
  line(X(1210), Y(560), X(1210), Y(623), "#999");

  // frame
  line(0, Y(498), total, Y(498), "#000");
  line(0.5, Y(503), 0.5, Y(670), "#000");
  line(0, Y(655), total, Y(655), "#000");
  line(0, Y(670), axis, Y(670), "#000");
  line(axis, 0, axis, Y(685), "#000");

  // price axis
  for (let p = 5.8; p < 19.9; p += 0.2) line(axis, Y(priceY(p)), axis + 3, Y(priceY(p)), "#000");
  for (let p = 6; p <= 18; p += 2) {
    line(axis, Y(priceY(p)), axis + 6, Y(priceY(p)), "#000");
    add("text", { x: axis + 8, y: Y(priceY(p)) + 3.5 }, p + ",000");
  }
  for (let v = 1; v <= 71; v++) line(axis, Y(volY(v)), axis + 3, Y(volY(v)), "#000");
  for (let v = 10; v <= 70; v += 10) {
    line(axis, Y(volY(v)), axis + 6, Y(volY(v)), "#000");
    if (v < 70) add("text", { x: axis + 8, y: Y(volY(v)) + 3.5 }, v + ".000.000");
  }

  // date axis
  months.forEach((m, i) => {
    if (i) line(X(m[0]), Y(655), X(m[0]), Y(670), "#000");
    add("text", { x: X(m[1]), y: Y(666) + 0.5, "text-anchor": "middle" }, m[2]);
  });
  years.forEach((y, i) => {
    if (i) line(X(y[0]), Y(670), X(y[0]), Y(685), "#000");
    add("text", { x: X(y[1]), y: Y(681) + 0.5, "text-anchor": "middle" }, y[2]);
  });
  add("text", { x: 27, y: Y(510) + 0.5 }, "GALP:xlis Volume");
}

draw();
window.addEventListener("resize", draw);
```
